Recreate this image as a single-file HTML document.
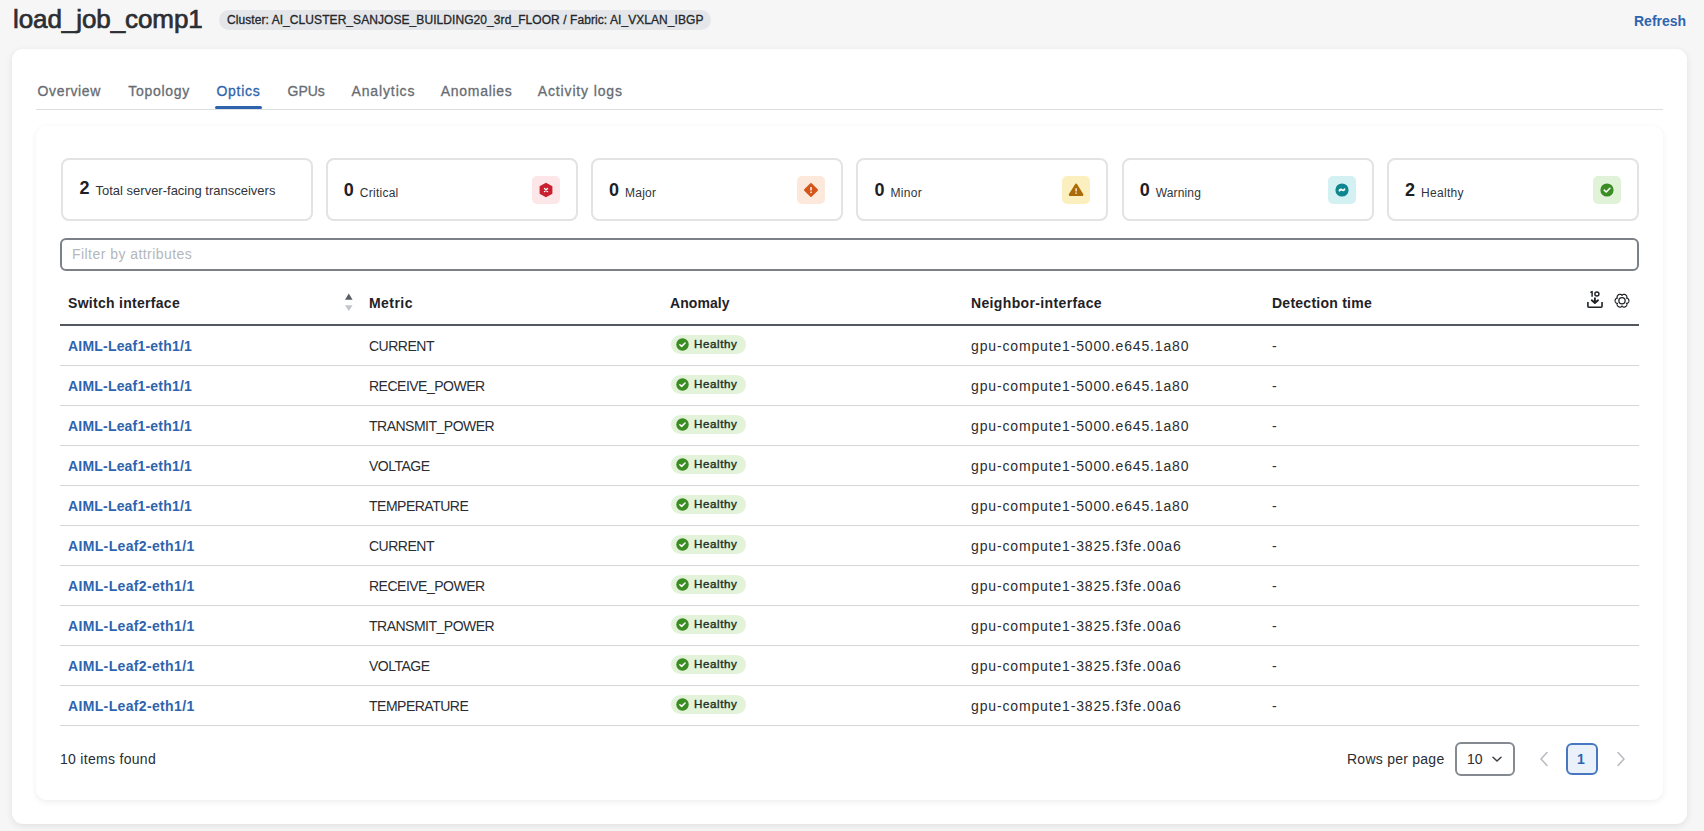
<!DOCTYPE html>
<html><head><meta charset="utf-8">
<style>
*{box-sizing:border-box;margin:0;padding:0}
html,body{width:1704px;height:831px;overflow:hidden;background:#f6f6f6;font-family:"Liberation Sans",sans-serif;color:#1f2226}
.abs{position:absolute}
.t{position:absolute;white-space:nowrap;line-height:1}
#title{left:13px;top:5.5px;font-size:26px;color:#2b2e33;-webkit-text-stroke:0.7px #2b2e33;letter-spacing:-0.08px}
#pill{left:219px;top:10px;width:492px;height:20px;border-radius:10px;background:#e4e6e9}
#pilltxt{left:227px;top:13.8px;font-size:12px;color:#23262a;-webkit-text-stroke:0.3px #23262a;letter-spacing:0.07px}
#refresh{left:1634px;top:13.6px;font-size:14px;font-weight:bold;color:#2e64ae}
#outer{left:12px;top:49px;width:1675px;height:775px;background:#fff;border-radius:11px;box-shadow:0 2px 7px rgba(0,0,0,0.09)}
.tab{position:absolute;top:84.2px;font-size:14px;color:#676c72;white-space:nowrap;line-height:1;-webkit-text-stroke:0.3px #676c72}
#tabline{left:36px;top:109px;width:1627px;height:1px;background:#dcdee0}
#tabul{left:215px;top:106px;width:47px;height:3px;background:#2e64ae;border-radius:2px}
#inner{left:36px;top:126px;width:1627px;height:674px;background:#fff;border-radius:11px;box-shadow:0 2px 6px rgba(0,0,0,0.07)}
.card{position:absolute;top:158px;width:252px;height:63px;border:2px solid #e2e3e5;border-radius:8px;background:#fff}
.num{position:absolute;font-size:18px;font-weight:bold;color:#1d2024;line-height:1}
.lbl{position:absolute;font-size:12px;color:#30343a;line-height:1;white-space:nowrap}
.ib{position:absolute;width:28px;height:28px;border-radius:5px}
#filter{left:60px;top:238px;width:1579px;height:33px;border:2px solid #7b8187;border-radius:6px;background:#fff}
#ph{left:72px;top:247.2px;font-size:14px;color:#b3b7bb;letter-spacing:0.45px}
.th{position:absolute;top:296.2px;font-size:14px;font-weight:bold;color:#1f2226;white-space:nowrap;line-height:1}
#hline{left:60px;top:324px;width:1579px;height:2px;background:#53585e}
.rl{position:absolute;left:60px;width:1579px;height:1px;background:#d4d6d8}
.lnk{position:absolute;left:68px;font-size:14px;font-weight:bold;color:#2e64ae;white-space:nowrap;line-height:1;letter-spacing:0.2px}
.met{position:absolute;left:369px;font-size:14px;color:#2a2d31;white-space:nowrap;line-height:1;letter-spacing:-0.5px}
.hp{position:absolute;left:671px;width:75px;height:19px;border-radius:10px;background:#e2f3da}
.hpc{position:absolute;left:5px;top:3px;width:13px;height:13px}
.hpt{position:absolute;left:23px;top:3.4px;font-size:11.6px;color:#22301f;line-height:1;white-space:nowrap;-webkit-text-stroke:0.4px #22301f;letter-spacing:0.6px}
.nb{position:absolute;left:971px;font-size:14px;color:#2a2d31;white-space:nowrap;line-height:1;letter-spacing:0.85px}
.dt{position:absolute;left:1272px;font-size:14px;color:#2a2d31;line-height:1}
</style></head><body>
<div class="t" id="title">load_job_comp1</div>
<div class="abs" id="pill"></div>
<div class="t" id="pilltxt">Cluster: AI_CLUSTER_SANJOSE_BUILDING20_3rd_FLOOR / Fabric: AI_VXLAN_IBGP</div>
<div class="t" id="refresh">Refresh</div>
<div class="abs" id="outer"></div>
<div class="tab" style="left:37.5px;letter-spacing:0.65px">Overview</div>
<div class="tab" style="left:128.3px;letter-spacing:0.7px">Topology</div>
<div class="tab" style="left:216.5px;letter-spacing:0.72px;color:#2e64ae;-webkit-text-stroke:0.3px #2e64ae">Optics</div>
<div class="tab" style="left:287.5px;letter-spacing:0.0px">GPUs</div>
<div class="tab" style="left:351.5px;letter-spacing:0.87px">Analytics</div>
<div class="tab" style="left:440.8px;letter-spacing:0.7px">Anomalies</div>
<div class="tab" style="left:537.8px;letter-spacing:0.85px">Activity logs</div>
<div class="abs" id="tabline"></div>
<div class="abs" id="tabul"></div>
<div class="abs" id="inner"></div>
<div class="card" style="left:60.5px"><div class="num" style="left:17px;top:18.7px">2</div><div class="lbl" style="left:33px;top:23.8px;font-size:13px">Total server-facing transceivers</div></div>
<div class="card" style="left:325.8px"><div class="num" style="left:16px;top:20.5px">0</div><div class="lbl" style="left:32px;top:26.5px;letter-spacing:0.25px">Critical</div><div class="ib" style="right:16px;top:16px;background:#fce6e8"><svg width="28" height="28" viewBox="0 0 28 28"><path d="M14 7.6 L19.6 10.8 L19.6 17.2 L14 20.4 L8.4 17.2 L8.4 10.8 Z" fill="#c9202f" stroke="#c9202f" stroke-width="1.6" stroke-linejoin="round"/><path d="M12.5 12.5 L15.5 15.5 M15.5 12.5 L12.5 15.5" stroke="#fff" stroke-width="1.4" stroke-linecap="round"/></svg></div></div>
<div class="card" style="left:591.1px"><div class="num" style="left:16px;top:20.5px">0</div><div class="lbl" style="left:32px;top:26.5px;letter-spacing:0.2px">Major</div><div class="ib" style="right:16px;top:16px;background:#fde8dc"><svg width="28" height="28" viewBox="0 0 28 28"><path d="M14 7.9 L20.1 14 L14 20.1 L7.9 14 Z" fill="#d4561a" stroke="#d4561a" stroke-width="1.8" stroke-linejoin="round"/><path d="M14 11.0 L14 14.6" stroke="#fff" stroke-width="1.4" stroke-linecap="butt"/><rect x="13.3" y="15.6" width="1.4" height="1.5" fill="#fff"/></svg></div></div>
<div class="card" style="left:856.4px"><div class="num" style="left:16px;top:20.5px">0</div><div class="lbl" style="left:32px;top:26.5px;letter-spacing:0.33px">Minor</div><div class="ib" style="right:16px;top:16px;background:#fbefbf"><svg width="28" height="28" viewBox="0 0 28 28"><path d="M14.1 8.8 L20.2 18.7 L8.0 18.7 Z" fill="#ac6a06" stroke="#ac6a06" stroke-width="2.4" stroke-linejoin="round"/><path d="M14.1 12.2 L14.1 15.4" stroke="#fff" stroke-width="1.3" stroke-linecap="butt"/><rect x="13.45" y="16.4" width="1.3" height="1.4" fill="#fff"/></svg></div></div>
<div class="card" style="left:1121.7px"><div class="num" style="left:16px;top:20.5px">0</div><div class="lbl" style="left:32px;top:26.5px;letter-spacing:0.15px">Warning</div><div class="ib" style="right:16px;top:16px;background:#d3f1f3"><svg width="28" height="28" viewBox="0 0 28 28"><circle cx="14" cy="14" r="6.6" fill="#0e8690"/><path d="M11.5 14.6 C12.2 13.2 13.3 13.2 14 13.9 C14.7 14.6 15.8 14.7 16.5 13.3" stroke="#fff" stroke-width="1.9" fill="none" stroke-linecap="round"/></svg></div></div>
<div class="card" style="left:1387.0px"><div class="num" style="left:16px;top:20.5px">2</div><div class="lbl" style="left:32px;top:26.5px;letter-spacing:0.3px">Healthy</div><div class="ib" style="right:16px;top:16px;background:#e0f3d9"><svg width="28" height="28" viewBox="0 0 28 28"><circle cx="14" cy="14" r="6.6" fill="#3b8c25"/><path d="M11.2 14.2 L13.2 16 L16.9 12.3" stroke="#fff" stroke-width="1.6" fill="none" stroke-linecap="round" stroke-linejoin="round"/></svg></div></div>
<div class="abs" id="filter"></div>
<div class="t" id="ph">Filter by attributes</div>
<div class="th" style="left:68px;letter-spacing:0.29px">Switch interface</div>
<svg class="abs" style="left:343px;top:291px" width="12" height="22" viewBox="0 0 12 22"><path d="M2 8.7 L5.8 2.4 L9.6 8.7 Z" fill="#5a5e63"/><path d="M2 14.2 L5.8 20 L9.6 14.2 Z" fill="#c2c5c8"/></svg>
<div class="th" style="left:369px;letter-spacing:0.45px">Metric</div>
<div class="th" style="left:670px;letter-spacing:0.07px">Anomaly</div>
<div class="th" style="left:971px;letter-spacing:0.36px">Neighbor-interface</div>
<div class="th" style="left:1272px;letter-spacing:0.25px">Detection time</div>
<svg class="abs" style="left:1584px;top:288px" width="22" height="24" viewBox="0 0 22 24"><path d="M6.4 4.6 L8.1 3.5 L8.1 8.7" stroke="#1f2226" stroke-width="1.45" fill="none" stroke-linejoin="round"/><ellipse cx="12.9" cy="6.0" rx="2.05" ry="2.0" stroke="#1f2226" stroke-width="1.4" fill="none"/><path d="M3.9 14.1 L3.9 18.2 Q3.9 19.2 4.9 19.2 L17.05 19.2 Q18.05 19.2 18.05 18.2 L18.05 14.1" stroke="#1f2226" stroke-width="1.6" fill="none"/><path d="M10.9 10.2 L10.9 14.8 M7.8 12.3 L10.9 15.0 L14.0 12.3" stroke="#1f2226" stroke-width="1.9" fill="none" stroke-linecap="round" stroke-linejoin="round"/></svg>
<svg class="abs" style="left:1611px;top:290px" width="22" height="22" viewBox="0 0 22 22"><path d="M17.90 10.72 L17.89 10.54 L17.88 10.36 L17.85 10.18 L17.81 10.00 L17.76 9.83 L17.70 9.66 L17.63 9.49 L17.55 9.33 L17.46 9.17 L17.36 9.02 L17.24 8.87 L17.12 8.73 L16.99 8.60 L16.84 8.48 L16.69 8.36 L16.52 8.26 L16.33 8.18 L16.13 8.11 L15.89 8.06 L15.50 8.12 L15.75 7.81 L15.83 7.58 L15.87 7.37 L15.89 7.17 L15.88 6.97 L15.86 6.78 L15.83 6.59 L15.78 6.41 L15.72 6.24 L15.65 6.07 L15.57 5.90 L15.48 5.74 L15.38 5.59 L15.27 5.45 L15.15 5.31 L15.03 5.18 L14.89 5.06 L14.75 4.94 L14.60 4.84 L14.45 4.74 L14.29 4.66 L14.13 4.58 L13.96 4.52 L13.79 4.46 L13.61 4.42 L13.43 4.38 L13.25 4.36 L13.07 4.35 L12.89 4.35 L12.70 4.36 L12.52 4.39 L12.34 4.42 L12.16 4.47 L11.98 4.54 L11.80 4.62 L11.63 4.71 L11.46 4.83 L11.30 4.97 L11.15 5.15 L11.00 5.52 L10.85 5.15 L10.70 4.97 L10.54 4.83 L10.37 4.71 L10.20 4.62 L10.02 4.54 L9.84 4.47 L9.66 4.42 L9.48 4.39 L9.30 4.36 L9.11 4.35 L8.93 4.35 L8.75 4.36 L8.57 4.38 L8.39 4.42 L8.21 4.46 L8.04 4.52 L7.87 4.58 L7.71 4.66 L7.55 4.74 L7.40 4.84 L7.25 4.94 L7.11 5.06 L6.97 5.18 L6.85 5.31 L6.73 5.45 L6.62 5.59 L6.52 5.74 L6.43 5.90 L6.35 6.07 L6.28 6.24 L6.22 6.41 L6.17 6.59 L6.14 6.78 L6.12 6.97 L6.11 7.17 L6.13 7.37 L6.17 7.58 L6.25 7.81 L6.50 8.12 L6.11 8.06 L5.87 8.11 L5.67 8.18 L5.48 8.26 L5.31 8.36 L5.16 8.48 L5.01 8.60 L4.88 8.73 L4.76 8.87 L4.64 9.02 L4.54 9.17 L4.45 9.33 L4.37 9.49 L4.30 9.66 L4.24 9.83 L4.19 10.00 L4.15 10.18 L4.12 10.36 L4.11 10.54 L4.10 10.72 L4.11 10.90 L4.12 11.08 L4.15 11.26 L4.19 11.44 L4.24 11.61 L4.30 11.78 L4.37 11.95 L4.45 12.11 L4.54 12.27 L4.64 12.42 L4.76 12.57 L4.88 12.71 L5.01 12.84 L5.16 12.96 L5.31 13.08 L5.48 13.18 L5.67 13.26 L5.87 13.33 L6.11 13.38 L6.50 13.32 L6.25 13.63 L6.17 13.86 L6.13 14.07 L6.11 14.27 L6.12 14.47 L6.14 14.66 L6.17 14.85 L6.22 15.03 L6.28 15.20 L6.35 15.37 L6.43 15.54 L6.52 15.70 L6.62 15.85 L6.73 15.99 L6.85 16.13 L6.97 16.26 L7.11 16.38 L7.25 16.50 L7.40 16.60 L7.55 16.70 L7.71 16.78 L7.87 16.86 L8.04 16.92 L8.21 16.98 L8.39 17.02 L8.57 17.06 L8.75 17.08 L8.93 17.09 L9.11 17.09 L9.30 17.08 L9.48 17.05 L9.66 17.02 L9.84 16.97 L10.02 16.90 L10.20 16.82 L10.37 16.73 L10.54 16.61 L10.70 16.47 L10.85 16.29 L11.00 15.92 L11.15 16.29 L11.30 16.47 L11.46 16.61 L11.63 16.73 L11.80 16.82 L11.98 16.90 L12.16 16.97 L12.34 17.02 L12.52 17.05 L12.70 17.08 L12.89 17.09 L13.07 17.09 L13.25 17.08 L13.43 17.06 L13.61 17.02 L13.79 16.98 L13.96 16.92 L14.13 16.86 L14.29 16.78 L14.45 16.70 L14.60 16.60 L14.75 16.50 L14.89 16.38 L15.03 16.26 L15.15 16.13 L15.27 15.99 L15.38 15.85 L15.48 15.70 L15.57 15.54 L15.65 15.37 L15.72 15.20 L15.78 15.03 L15.83 14.85 L15.86 14.66 L15.88 14.47 L15.89 14.27 L15.87 14.07 L15.83 13.86 L15.75 13.63 L15.50 13.32 L15.89 13.38 L16.13 13.33 L16.33 13.26 L16.52 13.18 L16.69 13.08 L16.84 12.96 L16.99 12.84 L17.12 12.71 L17.24 12.57 L17.36 12.42 L17.46 12.27 L17.55 12.11 L17.63 11.95 L17.70 11.78 L17.76 11.61 L17.81 11.44 L17.85 11.26 L17.88 11.08 L17.89 10.90 L17.90 10.72 Z" stroke="#1f2226" stroke-width="1.2" fill="none" stroke-linejoin="round"/><circle cx="11" cy="10.72" r="3.13" stroke="#1f2226" stroke-width="1.25" fill="none"/></svg>
<div class="abs" id="hline"></div>
<div class="lnk" style="top:339.15px">AIML-Leaf1-eth1/1</div>
<div class="met" style="top:339.15px">CURRENT</div>
<div class="hp" style="top:334.5px"><svg class="hpc" viewBox="0 0 13 13"><circle cx="6.5" cy="6.5" r="6.2" fill="#3b8c25"/><path d="M3.9 6.7 L5.7 8.4 L9.1 5" stroke="#fff" stroke-width="1.5" fill="none" stroke-linecap="round" stroke-linejoin="round"/></svg><div class="hpt">Healthy</div></div>
<div class="nb" style="top:339.15px">gpu-compute1-5000.e645.1a80</div>
<div class="dt" style="top:339.15px">-</div>
<div class="rl" style="top:365px"></div>
<div class="lnk" style="top:379.15px">AIML-Leaf1-eth1/1</div>
<div class="met" style="top:379.15px">RECEIVE_POWER</div>
<div class="hp" style="top:374.5px"><svg class="hpc" viewBox="0 0 13 13"><circle cx="6.5" cy="6.5" r="6.2" fill="#3b8c25"/><path d="M3.9 6.7 L5.7 8.4 L9.1 5" stroke="#fff" stroke-width="1.5" fill="none" stroke-linecap="round" stroke-linejoin="round"/></svg><div class="hpt">Healthy</div></div>
<div class="nb" style="top:379.15px">gpu-compute1-5000.e645.1a80</div>
<div class="dt" style="top:379.15px">-</div>
<div class="rl" style="top:405px"></div>
<div class="lnk" style="top:419.15px">AIML-Leaf1-eth1/1</div>
<div class="met" style="top:419.15px">TRANSMIT_POWER</div>
<div class="hp" style="top:414.5px"><svg class="hpc" viewBox="0 0 13 13"><circle cx="6.5" cy="6.5" r="6.2" fill="#3b8c25"/><path d="M3.9 6.7 L5.7 8.4 L9.1 5" stroke="#fff" stroke-width="1.5" fill="none" stroke-linecap="round" stroke-linejoin="round"/></svg><div class="hpt">Healthy</div></div>
<div class="nb" style="top:419.15px">gpu-compute1-5000.e645.1a80</div>
<div class="dt" style="top:419.15px">-</div>
<div class="rl" style="top:445px"></div>
<div class="lnk" style="top:459.15px">AIML-Leaf1-eth1/1</div>
<div class="met" style="top:459.15px">VOLTAGE</div>
<div class="hp" style="top:454.5px"><svg class="hpc" viewBox="0 0 13 13"><circle cx="6.5" cy="6.5" r="6.2" fill="#3b8c25"/><path d="M3.9 6.7 L5.7 8.4 L9.1 5" stroke="#fff" stroke-width="1.5" fill="none" stroke-linecap="round" stroke-linejoin="round"/></svg><div class="hpt">Healthy</div></div>
<div class="nb" style="top:459.15px">gpu-compute1-5000.e645.1a80</div>
<div class="dt" style="top:459.15px">-</div>
<div class="rl" style="top:485px"></div>
<div class="lnk" style="top:499.15px">AIML-Leaf1-eth1/1</div>
<div class="met" style="top:499.15px">TEMPERATURE</div>
<div class="hp" style="top:494.5px"><svg class="hpc" viewBox="0 0 13 13"><circle cx="6.5" cy="6.5" r="6.2" fill="#3b8c25"/><path d="M3.9 6.7 L5.7 8.4 L9.1 5" stroke="#fff" stroke-width="1.5" fill="none" stroke-linecap="round" stroke-linejoin="round"/></svg><div class="hpt">Healthy</div></div>
<div class="nb" style="top:499.15px">gpu-compute1-5000.e645.1a80</div>
<div class="dt" style="top:499.15px">-</div>
<div class="rl" style="top:525px"></div>
<div class="lnk" style="top:539.15px;letter-spacing:0.35px">AIML-Leaf2-eth1/1</div>
<div class="met" style="top:539.15px">CURRENT</div>
<div class="hp" style="top:534.5px"><svg class="hpc" viewBox="0 0 13 13"><circle cx="6.5" cy="6.5" r="6.2" fill="#3b8c25"/><path d="M3.9 6.7 L5.7 8.4 L9.1 5" stroke="#fff" stroke-width="1.5" fill="none" stroke-linecap="round" stroke-linejoin="round"/></svg><div class="hpt">Healthy</div></div>
<div class="nb" style="top:539.15px">gpu-compute1-3825.f3fe.00a6</div>
<div class="dt" style="top:539.15px">-</div>
<div class="rl" style="top:565px"></div>
<div class="lnk" style="top:579.15px;letter-spacing:0.35px">AIML-Leaf2-eth1/1</div>
<div class="met" style="top:579.15px">RECEIVE_POWER</div>
<div class="hp" style="top:574.5px"><svg class="hpc" viewBox="0 0 13 13"><circle cx="6.5" cy="6.5" r="6.2" fill="#3b8c25"/><path d="M3.9 6.7 L5.7 8.4 L9.1 5" stroke="#fff" stroke-width="1.5" fill="none" stroke-linecap="round" stroke-linejoin="round"/></svg><div class="hpt">Healthy</div></div>
<div class="nb" style="top:579.15px">gpu-compute1-3825.f3fe.00a6</div>
<div class="dt" style="top:579.15px">-</div>
<div class="rl" style="top:605px"></div>
<div class="lnk" style="top:619.15px;letter-spacing:0.35px">AIML-Leaf2-eth1/1</div>
<div class="met" style="top:619.15px">TRANSMIT_POWER</div>
<div class="hp" style="top:614.5px"><svg class="hpc" viewBox="0 0 13 13"><circle cx="6.5" cy="6.5" r="6.2" fill="#3b8c25"/><path d="M3.9 6.7 L5.7 8.4 L9.1 5" stroke="#fff" stroke-width="1.5" fill="none" stroke-linecap="round" stroke-linejoin="round"/></svg><div class="hpt">Healthy</div></div>
<div class="nb" style="top:619.15px">gpu-compute1-3825.f3fe.00a6</div>
<div class="dt" style="top:619.15px">-</div>
<div class="rl" style="top:645px"></div>
<div class="lnk" style="top:659.15px;letter-spacing:0.35px">AIML-Leaf2-eth1/1</div>
<div class="met" style="top:659.15px">VOLTAGE</div>
<div class="hp" style="top:654.5px"><svg class="hpc" viewBox="0 0 13 13"><circle cx="6.5" cy="6.5" r="6.2" fill="#3b8c25"/><path d="M3.9 6.7 L5.7 8.4 L9.1 5" stroke="#fff" stroke-width="1.5" fill="none" stroke-linecap="round" stroke-linejoin="round"/></svg><div class="hpt">Healthy</div></div>
<div class="nb" style="top:659.15px">gpu-compute1-3825.f3fe.00a6</div>
<div class="dt" style="top:659.15px">-</div>
<div class="rl" style="top:685px"></div>
<div class="lnk" style="top:699.15px;letter-spacing:0.35px">AIML-Leaf2-eth1/1</div>
<div class="met" style="top:699.15px">TEMPERATURE</div>
<div class="hp" style="top:694.5px"><svg class="hpc" viewBox="0 0 13 13"><circle cx="6.5" cy="6.5" r="6.2" fill="#3b8c25"/><path d="M3.9 6.7 L5.7 8.4 L9.1 5" stroke="#fff" stroke-width="1.5" fill="none" stroke-linecap="round" stroke-linejoin="round"/></svg><div class="hpt">Healthy</div></div>
<div class="nb" style="top:699.15px">gpu-compute1-3825.f3fe.00a6</div>
<div class="dt" style="top:699.15px">-</div>
<div class="rl" style="top:725px"></div>
<div class="t" style="left:60px;top:752.4px;font-size:14px;color:#2a2d31;letter-spacing:0.3px">10 items found</div>
<div class="t" style="left:1347px;top:752px;font-size:14px;color:#2a2d31;letter-spacing:0.25px">Rows per page</div>
<div class="abs" style="left:1455px;top:742px;width:60px;height:34px;border:2px solid #858a90;border-radius:6px;background:#fff"></div>
<div class="t" style="left:1467px;top:752px;font-size:14px;color:#2a2d31">10</div>
<svg class="abs" style="left:1490px;top:753px" width="14" height="12" viewBox="0 0 14 12"><path d="M3 4.2 L7 8 L11 4.2" stroke="#3a3e43" stroke-width="1.5" fill="none" stroke-linecap="round" stroke-linejoin="round"/></svg>
<svg class="abs" style="left:1536px;top:750px" width="16" height="18" viewBox="0 0 16 18"><path d="M11 2.5 L5 9 L11 15.5" stroke="#b9bcc0" stroke-width="1.6" fill="none" stroke-linecap="round" stroke-linejoin="round"/></svg>
<div class="abs" style="left:1566px;top:743px;width:32px;height:32px;border:2px solid #4677c0;border-radius:6px;background:#eaf1fb"></div>
<div class="t" style="left:1577px;top:752px;font-size:14px;font-weight:bold;color:#2e64ae">1</div>
<svg class="abs" style="left:1613px;top:750px" width="16" height="18" viewBox="0 0 16 18"><path d="M5 2.5 L11 9 L5 15.5" stroke="#b9bcc0" stroke-width="1.6" fill="none" stroke-linecap="round" stroke-linejoin="round"/></svg>
</body></html>
